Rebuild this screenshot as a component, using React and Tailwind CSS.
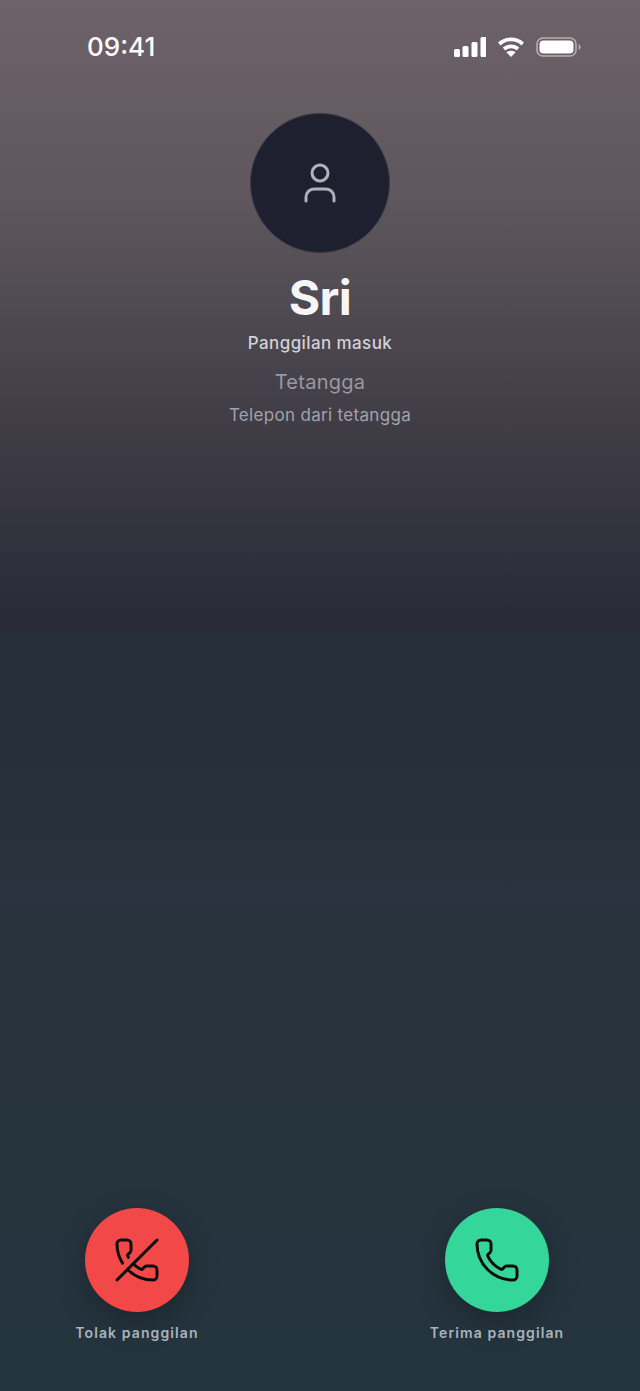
import { Phone, PhoneOff, User } from "lucide-react";

const StatusIcons = () => (
  <div className="flex items-center gap-3">
    <svg width="32" height="20" viewBox="0 0 32 20" fill="#fff">
      <rect x="0" y="12" width="6" height="8" rx="1.5" />
      <rect x="8.5" y="9" width="6" height="11" rx="1.5" />
      <rect x="17.5" y="5" width="6" height="15" rx="1.5" />
      <rect x="26.5" y="0" width="6" height="20" rx="1.5" />
    </svg>
    <svg width="26" height="20" viewBox="0 0 26 20" fill="none" stroke="#fff" strokeWidth="3.8">
      <path d="M1.3 7C8 .9 18 .9 24.7 7" />
      <path d="M6 12c4-3.6 10-3.6 14 0" />
      <path d="M13 20l-4.6-4.8c2.6-2 6.6-2 9.2 0z" fill="#fff" stroke="none" />
    </svg>
    <svg width="45" height="20" viewBox="0 0 45 20" fill="none">
      <rect x="1" y="1" width="39" height="18" rx="6" stroke="#b4afb2" strokeWidth="1.6" />
      <rect x="3.5" y="3.5" width="34" height="13" rx="4" fill="#fff" />
      <path d="M42.5 7c1.5.5 2.3 1.6 2.3 3s-.8 2.5-2.3 3z" fill="#a8a3a6" />
    </svg>
  </div>
);

const CallAction = ({ label, color, children }) => (
  <div className="flex flex-col items-center w-[140px]">
    <div
      className={`flex items-center justify-center w-[104px] h-[104px] rounded-full shadow-[0_10px_30px_rgba(0,0,0,0.25)] ${color}`}
    >
      {children}
    </div>
    <span className="mt-[12px] text-[14px] leading-[18px] font-semibold tracking-[1.1px] text-[#a8b3bb] whitespace-nowrap">
      {label}
    </span>
  </div>
);

export default function App() {
  return (
    <div className="flex flex-col h-[1391px] overflow-hidden font-['Inter',sans-serif] bg-[linear-gradient(180deg,#6e6269_0%,#5f575d_14%,#423f48_29%,#282a37_45%,#252e39_45.5%,#29313a_62%,#2c3340_64%,#27333c_66%,#24343e_100%)]">
      {/* Status bar */}
      <div className="flex items-center justify-between h-[20px] mt-[37px] pl-[87px] pr-[59px]">
        <span className="text-[26px] leading-[20px] font-medium text-white">09:41</span>
        <StatusIcons />
      </div>

      {/* Caller */}
      <div className="flex flex-col items-center mt-[56px]">
        <div className="flex items-center justify-center w-[140px] h-[140px] rounded-full bg-[#1e2030] border border-[#3a3a47]">
          <User size={48} strokeWidth={1.5} className="text-[#b0b2bb]" />
        </div>
        <h1 className="mt-[16px] text-[48px] leading-[58px] font-bold tracking-[-0.6px] text-[#f6f5f7]">Sri</h1>
        <p className="mt-[4px] text-[17px] leading-[24px] font-medium tracking-[0.4px] text-[#d3d1d5]">Panggilan masuk</p>
        <p className="mt-[12px] text-[20px] leading-[30px] tracking-[0.25px] text-[#9a98a2]">Tetangga</p>
        <p className="mt-[6px] text-[17px] leading-[24px] tracking-[0.32px] text-[#a3a2ab]">Telepon dari tetangga</p>
      </div>

      {/* Answer / decline */}
      <div className="flex justify-between mt-auto mb-[49px] pl-[67px] pr-[73px]">
        <CallAction label="Tolak panggilan" color="bg-[#f34848]">
          <PhoneOff size={48} strokeWidth={1.5} className="text-[#0d0d10]" />
        </CallAction>
        <CallAction label="Terima panggilan" color="bg-[#34d699]">
          <Phone size={48} strokeWidth={1.5} className="text-[#0d0d10]" />
        </CallAction>
      </div>
    </div>
  );
}
